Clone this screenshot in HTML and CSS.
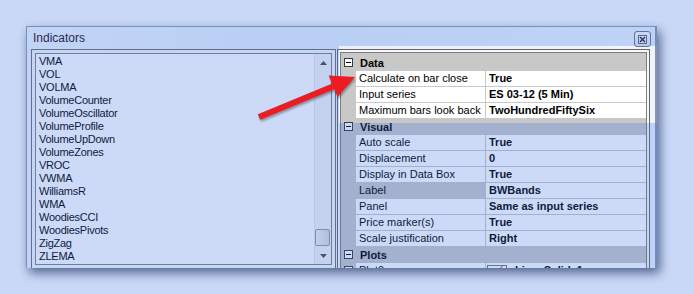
FILE: index.html
```html
<!DOCTYPE html>
<html lang="en">
<head>
  <meta charset="UTF-8">
  <title>Indicators</title>
  <link rel="stylesheet" href="styles.css">
</head>
<body>

<div class="screen">
  <div class="window">
    <div class="titlebar">
      <span class="title">Indicators</span>
      <span class="close-btn">
        <svg width="9" height="9" viewBox="0 0 9 9">
          <rect x="0.5" y="0.5" width="8" height="8" fill="none" stroke="#6a6a6a"/>
          <path d="M2 2 L7 7 M7 2 L2 7" stroke="#222" stroke-width="1.3"/>
        </svg>
      </span>
    </div>

    <div class="content">
      <!-- indicator list -->
      <div class="list-panel">
        <div class="list">
          <ul class="items">
            <li>VMA</li>
            <li>VOL</li>
            <li>VOLMA</li>
            <li>VolumeCounter</li>
            <li>VolumeOscillator</li>
            <li>VolumeProfile</li>
            <li>VolumeUpDown</li>
            <li>VolumeZones</li>
            <li>VROC</li>
            <li>VWMA</li>
            <li>WilliamsR</li>
            <li>WMA</li>
            <li>WoodiesCCI</li>
            <li>WoodiesPivots</li>
            <li>ZigZag</li>
            <li>ZLEMA</li>
          </ul>
          <div class="scrollbar">
            <span class="scroll-btn">
              <svg width="7" height="4" viewBox="0 0 7 4"><path d="M0 4 L3.5 0 L7 4 Z" fill="#4a4a4a"/></svg>
            </span>
            <span class="track"><span class="thumb"></span></span>
            <span class="scroll-btn">
              <svg width="7" height="4" viewBox="0 0 7 4"><path d="M0 0 L3.5 4 L7 0 Z" fill="#4a4a4a"/></svg>
            </span>
          </div>
        </div>
      </div>

      <!-- property grid -->
      <div class="grid-panel">
        <div class="grid">
          <div class="row category">
            <span class="gutter"><span class="toggle minus"></span></span>
            <span class="cat-name">Data</span>
          </div>
          <div class="row">
            <span class="gutter"></span>
            <span class="name">Calculate on bar close</span>
            <span class="value">True</span>
          </div>
          <div class="row">
            <span class="gutter"></span>
            <span class="name">Input series</span>
            <span class="value">ES 03-12 (5 Min)</span>
          </div>
          <div class="row">
            <span class="gutter"></span>
            <span class="name">Maximum bars look back</span>
            <span class="value">TwoHundredFiftySix</span>
          </div>

          <div class="row category">
            <span class="gutter"><span class="toggle minus"></span></span>
            <span class="cat-name">Visual</span>
          </div>
          <div class="row">
            <span class="gutter"></span>
            <span class="name">Auto scale</span>
            <span class="value">True</span>
          </div>
          <div class="row">
            <span class="gutter"></span>
            <span class="name">Displacement</span>
            <span class="value">0</span>
          </div>
          <div class="row">
            <span class="gutter"></span>
            <span class="name">Display in Data Box</span>
            <span class="value">True</span>
          </div>
          <div class="row selected">
            <span class="gutter"></span>
            <span class="name">Label</span>
            <span class="value">BWBands</span>
          </div>
          <div class="row">
            <span class="gutter"></span>
            <span class="name">Panel</span>
            <span class="value">Same as input series</span>
          </div>
          <div class="row">
            <span class="gutter"></span>
            <span class="name">Price marker(s)</span>
            <span class="value">True</span>
          </div>
          <div class="row">
            <span class="gutter"></span>
            <span class="name">Scale justification</span>
            <span class="value">Right</span>
          </div>

          <div class="row category">
            <span class="gutter"><span class="toggle minus"></span></span>
            <span class="cat-name">Plots</span>
          </div>
          <div class="row">
            <span class="gutter"><span class="toggle plus"></span></span>
            <span class="name">Plot0</span>
            <span class="value"><span class="swatch"></span>Line, Solid, 1px</span>
          </div>
        </div>
      </div>
    </div>
  </div>
</div>

<!-- tint over everything but the highlighted data section -->
<div class="spotlight"></div>

<svg class="pointer" width="693" height="294" viewBox="0 0 693 294">
  <line x1="259" y1="117" x2="334" y2="86" stroke="#ec1c24" stroke-width="6"/>
  <polygon points="355,77 328.6,75.5 337.5,96.8" fill="#ec1c24"/>
</svg>

</body>
</html>
```

FILE: styles.css
```css
* {
  box-sizing: border-box;
}

body {
  margin: 0;
  width: 693px;
  height: 294px;
  overflow: hidden;
  background: #fbfdff;
  font-family: "Liberation Sans", Arial, sans-serif;
  font-size: 11px;
  color: #000;
}

.screen {
  padding: 26px 0 0 26px;
}

.window {
  width: 631px;
  height: 242px;
  overflow: hidden;
  background: #eef5fc;
  border: 1px solid #8e9cba;
  border-bottom: none;
  border-right: 2px solid #8796b8;
  box-shadow: 3px 5px 10px rgba(40, 48, 70, 0.75);
}

.titlebar {
  height: 22px;
  display: flex;
  justify-content: space-between;
  align-items: flex-start;
  padding: 0 4px 0 6px;
  background: linear-gradient(90deg, #f3f8fd, #e6f0fb 40%, #eef5fc);
}

.title {
  font-size: 12px;
  line-height: 22px;
  color: #2a0a16;
}

.close-btn {
  width: 17px;
  height: 16px;
  margin-top: 4px;
  border: 1px solid #69758f;
  border-radius: 3px;
  background: linear-gradient(#fdfdfd, #e4e9f1);
  display: flex;
  align-items: center;
  justify-content: center;
}

.content {
  display: flex;
  gap: 1px;
  padding: 0 5px 0 4px;
}

/* left list */

.list-panel {
  width: 305px;
  height: 220px;
  border: 1px solid #707070;
  padding: 3px;
  background: #f6f8fb;
}

.list {
  height: 212px;
  display: flex;
  border: 1px solid #848484;
  background: #fff;
}

.items {
  flex: 1;
  list-style: none;
  margin: 0;
  padding: 1px 0 0 3px;
}

.items li {
  height: 13px;
  line-height: 13px;
  letter-spacing: -0.25px;
}

.scrollbar {
  width: 17px;
  display: flex;
  flex-direction: column;
  background: #f4f4f4;
  border-left: 1px solid #e8e8e8;
}

.scroll-btn {
  height: 17px;
  display: flex;
  align-items: center;
  justify-content: center;
}

.track {
  flex: 1;
  display: flex;
  flex-direction: column;
  justify-content: flex-end;
  padding: 0 1px 1px 0;
}

.thumb {
  height: 17px;
  border: 1px solid #9a9a9a;
  border-radius: 2px;
  background: linear-gradient(90deg, #f2f2f2, #dcdcdc);
}

/* property grid */

.grid-panel {
  flex: 1;
  height: 224px;
  border: 1px solid #666;
  padding: 2px;
  background: #f6f8fb;
}

.grid {
  height: 218px;
  border: 1px solid #7c7c7c;
  padding-top: 2px;
  background: #c8c8c8;
}

.row {
  display: flex;
  height: 16px;
}

.gutter {
  width: 15px;
  flex: none;
  padding: 3px 0 0 3px;
}

.toggle {
  display: block;
  width: 9px;
  height: 9px;
  border: 1px solid #3a3a3a;
  background: #fff;
  position: relative;
}

.toggle::before {
  content: "";
  position: absolute;
  left: 1px;
  top: 3px;
  width: 5px;
  height: 1px;
  background: #000;
}

.toggle.plus::after {
  content: "";
  position: absolute;
  left: 3px;
  top: 1px;
  width: 1px;
  height: 5px;
  background: #000;
}

.cat-name {
  padding-left: 4px;
  font-weight: bold;
  line-height: 16px;
}

.name,
.value {
  background: #fff;
  border-bottom: 1px solid #c8c8c8;
  line-height: 15px;
  padding-left: 3px;
  white-space: nowrap;
  overflow: hidden;
}

.name {
  width: 130px;
  flex: none;
  border-right: 1px solid #c8c8c8;
}

.value {
  flex: 1;
  font-weight: bold;
  display: flex;
  align-items: center;
}

.row.selected .name {
  background: #c8c8c8;
}

.swatch {
  width: 20px;
  height: 13px;
  margin: 2px 8px 0 -2px;
  border: 1px solid #777;
  background: linear-gradient(135deg, #fff 45%, #e5a020 45%, #e5a020 55%, #fff 55%);
}

/* overlays */

.spotlight {
  position: absolute;
  left: 339px;
  top: 46px;
  width: 318px;
  height: 77px;
  box-shadow: 0 0 0 2000px rgba(55, 110, 223, 0.255);
  pointer-events: none;
}

.pointer {
  position: absolute;
  left: 0;
  top: 0;
  pointer-events: none;
  filter: drop-shadow(1px 2px 1px rgba(0, 0, 0, 0.35));
}
```
